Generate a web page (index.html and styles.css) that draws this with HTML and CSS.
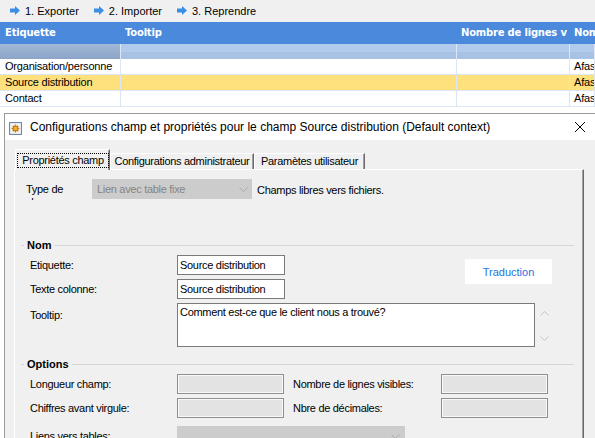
FILE: index.html
```html
<!DOCTYPE html>
<html lang="fr">
<head>
    <meta charset="UTF-8"/>
    <title>Configurations champ</title>
    <link rel="stylesheet" href="styles.css">
</head>
<body>

    <div class="toolbar">
        <span class="tool"><svg viewBox="0 0 10 9"><polygon points="0,2.5 5,2.5 5,0 10,4.5 5,9 5,6.5 0,6.5"/></svg>1. Exporter</span>
        <span class="tool"><svg viewBox="0 0 10 9"><polygon points="0,2.5 5,2.5 5,0 10,4.5 5,9 5,6.5 0,6.5"/></svg>2. Importer</span>
        <span class="tool"><svg viewBox="0 0 10 9"><polygon points="0,2.5 5,2.5 5,0 10,4.5 5,9 5,6.5 0,6.5"/></svg>3. Reprendre</span>
    </div>

    <div class="grid">
        <div class="grid-row head">
            <div class="cell first">Etiquette</div>
            <div class="cell">Tooltip</div>
            <div class="cell">Nombre de lignes v</div>
            <div class="cell">Nom</div>
        </div>
        <div class="grid-row filter">
            <div class="cell first"></div>
            <div class="cell"></div>
            <div class="cell"></div>
            <div class="cell"></div>
        </div>
        <div class="grid-row">
            <div class="cell first">Organisation/personne</div>
            <div class="cell"></div>
            <div class="cell"></div>
            <div class="cell">Afas</div>
        </div>
        <div class="grid-row selected">
            <div class="cell first">Source distribution</div>
            <div class="cell"></div>
            <div class="cell"></div>
            <div class="cell">Afas</div>
        </div>
        <div class="grid-row">
            <div class="cell first">Contact</div>
            <div class="cell"></div>
            <div class="cell"></div>
            <div class="cell">Afas</div>
        </div>
    </div>

    <div class="dialog">
        <div class="titlebar">
            <svg class="app-icon" viewBox="0 0 13 13">
                <rect x="0.5" y="0.5" width="12" height="12" fill="#dfe7f3" stroke="#7187b0"/>
                <rect x="2" y="2" width="9" height="9" fill="#fbf6e8"/>
                <g stroke="#c97a10" stroke-width="1.4">
                    <line x1="6.5" y1="2.5" x2="6.5" y2="10.5"/>
                    <line x1="2.5" y1="6.5" x2="10.5" y2="6.5"/>
                    <line x1="3.7" y1="3.7" x2="9.3" y2="9.3"/>
                    <line x1="9.3" y1="3.7" x2="3.7" y2="9.3"/>
                </g>
                <circle cx="6.5" cy="6.5" r="2.3" fill="#f2b233" stroke="#b56a08" stroke-width="0.8"/>
            </svg>
            <span class="title">Configurations champ et propriétés pour le champ Source distribution (Default context)</span>
            <svg class="close" viewBox="0 0 10 10">
                <line x1="0" y1="0" x2="10" y2="10"/>
                <line x1="10" y1="0" x2="0" y2="10"/>
            </svg>
        </div>

        <div class="dialog-body">
            <div class="tabs">
                <div class="tab active tab-props"><span class="focus">Propriétés champ</span></div>
                <div class="tab tab-admin">Configurations administrateur</div>
                <div class="tab tab-user">Paramètes utilisateur</div>
            </div>

            <div class="panel">
                <div class="type-row">
                    <div class="type-label">Type de<br>champ:</div>
                    <div class="select type-select">
                        <span>Lien avec table fixe</span>
                        <svg class="chevron" viewBox="0 0 9 5"><polyline points="0.5,0.5 4.5,4.5 8.5,0.5"/></svg>
                    </div>
                    <div class="type-note">Champs libres vers fichiers.</div>
                </div>

                <div class="legend">Nom</div>
                <div class="nom-grid">
                    <div class="label">Etiquette:</div>
                    <div class="field">Source distribution</div>
                    <div class="traduction">Traduction</div>

                    <div class="label">Texte colonne:</div>
                    <div class="field">Source distribution</div>

                    <div class="label top">Tooltip:</div>
                    <div class="tooltip-cell">
                        <div class="textarea">Comment est-ce que le client nous a trouvé?</div>
                        <div class="spin">
                            <svg viewBox="0 0 9 5"><polyline points="0.5,4.5 4.5,0.5 8.5,4.5"/></svg>
                            <svg viewBox="0 0 9 5"><polyline points="0.5,0.5 4.5,4.5 8.5,0.5"/></svg>
                        </div>
                    </div>
                </div>

                <div class="legend options">Options</div>
                <div class="opt-grid">
                    <div class="label">Longueur champ:</div>
                    <div class="field disabled"></div>
                    <div class="label second">Nombre de lignes visibles:</div>
                    <div class="field disabled"></div>

                    <div class="label">Chiffres avant virgule:</div>
                    <div class="field disabled"></div>
                    <div class="label second">Nbre de décimales:</div>
                    <div class="field disabled"></div>

                    <div class="label end">Liens vers tables:</div>
                    <div class="select links-select">
                        <span></span>
                        <svg class="chevron" viewBox="0 0 9 5"><polyline points="0.5,0.5 4.5,4.5 8.5,0.5"/></svg>
                    </div>
                </div>
            </div>
        </div>
    </div>

</body>
</html>
```

FILE: styles.css
```css
body {
    margin: 0;
    width: 595px;
    height: 438px;
    overflow: hidden;
    font-family: "Liberation Sans", Arial, sans-serif;
    font-size: 11px;
    color: #000;
    background-color: #fff;
}

* {
    box-sizing: border-box;
}

/* barre d'outils */

.toolbar {
    display: flex;
    align-items: center;
    gap: 15px;
    height: 22px;
    padding-left: 10px;
    padding-bottom: 1px;
    background-color: #f0f0f0;
}

.tool {
    display: flex;
    align-items: center;
    gap: 5px;
}

.tool svg {
    width: 10px;
    height: 9px;
    fill: #3a8ee6;
}

/* grille */

.grid {
    background-color: #fff;
    padding-bottom: 6px;
}

.grid-row {
    display: grid;
    grid-template-columns: 121px 336px 113px 1fr;
    height: 16px;
}

.cell {
    padding-left: 4px;
    border-right: 1px solid #dbe6f4;
    border-bottom: 1px solid #dbe6f4;
    line-height: 15px;
    white-space: nowrap;
    overflow: hidden;
    letter-spacing: -0.2px;
}

.cell.first {
    padding-left: 5px;
}

.head {
    height: 22px;
    background-color: #4a89dc;
}

.head .cell {
    font-family: "DejaVu Sans", Verdana, sans-serif;
    font-weight: bold;
    font-size: 10px;
    color: #fff;
    border: none;
    line-height: 22px;
}

.filter {
    height: 15px;
}

.filter .cell {
    background: linear-gradient(#b2caeb 0, #b2caeb 55%, #a8c2e6 55%, #a8c2e6 100%);
    border-right: 1px solid #dde8f6;
    border-bottom: none;
}

.filter .cell.first {
    background: linear-gradient(#a3b8d6, #8ba4c8);
}

.selected {
    background-color: #fee07c;
}

/* dialogue */

.dialog {
    margin-left: 4px;
    border-left: 1px solid #9a9a9a;
    border-top: 1px solid #9a9a9a;
}

.titlebar {
    display: flex;
    align-items: center;
    height: 26px;
    padding-left: 4px;
    padding-right: 10px;
    background-color: #fff;
}

.app-icon {
    width: 13px;
    height: 13px;
    margin-right: 8px;
    margin-top: 3px;
    flex-shrink: 0;
}

.title {
    font-size: 12px;
    white-space: nowrap;
}

.close {
    width: 10px;
    height: 10px;
    margin-left: auto;
    stroke: #000;
    stroke-width: 1;
    flex-shrink: 0;
}

.dialog-body {
    height: 300px;
    padding-top: 9px;
    background-color: #f0f0f0;
    letter-spacing: -0.3px;
}

/* onglets */

.tabs {
    display: flex;
    align-items: flex-end;
    height: 20px;
    padding-left: 10px;
    position: relative;
    z-index: 1;
}

.tab {
    height: 16px;
    line-height: 15px;
    text-align: center;
    white-space: nowrap;
    border-top: 1px solid #fff;
    border-left: 1px solid #fff;
    border-right: 1px solid #696969;
    box-shadow: inset -1px 0 #a0a0a0;
}

.tab-props {
    width: 95px;
}

.tab-admin {
    width: 144px;
}

.tab-user {
    width: 111px;
}

.tab.active {
    height: 21px;
    margin-bottom: -1px;
    display: flex;
    align-items: center;
    justify-content: center;
    background-color: #f0f0f0;
    padding-left: 1px;
}

.focus {
    border: 1px dotted #000;
    padding: 0 4px;
    line-height: 13px;
}

.panel {
    width: 570px;
    height: 280px;
    margin-left: 9px;
    border-top: 1px solid #fff;
    border-left: 1px solid #fff;
    border-right: 1px solid #696969;
    box-shadow: inset -1px 0 #a0a0a0;
}

/* type de champ */

.type-row {
    display: flex;
    align-items: center;
    margin-top: 9px;
    padding-left: 11px;
}

.type-label {
    width: 66px;
    height: 21px;
    padding-top: 4px;
    line-height: 13px;
    overflow: hidden;
}

.select {
    display: flex;
    align-items: center;
    justify-content: space-between;
    height: 20px;
    padding: 0 4px 0 5px;
    background-color: #cccccc;
    color: #858585;
}

.type-select {
    width: 160px;
    margin-top: -1px;
}

.chevron,
.spin svg {
    width: 9px;
    height: 5px;
    fill: none;
    stroke: #adadad;
    stroke-width: 1;
}

.type-note {
    margin-left: 5px;
}

/* groupes */

.legend {
    display: flex;
    align-items: center;
    gap: 3px;
    height: 14px;
    margin: 38px 9px 0 6px;
    font-weight: bold;
    letter-spacing: 0;
}

.legend::before {
    content: "";
    width: 3px;
    border-top: 1px solid #d6d6d6;
}

.legend::after {
    content: "";
    flex: 1;
    border-top: 1px solid #d6d6d6;
}

.legend.options {
    margin-top: 10px;
}

.label {
    grid-column: 1;
    white-space: nowrap;
}

.label.top {
    align-self: start;
    margin-top: 6px;
}

.field {
    grid-column: 2;
    height: 20px;
    padding-left: 2px;
    line-height: 18px;
    background-color: #fff;
    border: 1px solid #7a7a7a;
    white-space: nowrap;
}

.field.disabled {
    background-color: #e3e3e3;
    border-color: #8f8f8f;
    box-shadow: inset 0 0 0 1px #f7f7f7;
}

.nom-grid {
    display: grid;
    grid-template-columns: 147px 108px 180px 87px;
    grid-template-rows: 20px 20px 44px;
    row-gap: 4px;
    align-items: center;
    margin-top: 3px;
    padding-left: 15px;
}

.traduction {
    grid-column: 4;
    grid-row: 1 / 3;
    align-self: start;
    display: flex;
    align-items: center;
    justify-content: center;
    height: 25px;
    margin-top: 4px;
    background-color: #fff;
    color: #2474dc;
    letter-spacing: 0;
}

.tooltip-cell {
    grid-column: 2 / 5;
    display: flex;
    height: 44px;
}

.textarea {
    width: 358px;
    height: 44px;
    padding: 2px 2px 0;
    line-height: 13px;
    background-color: #fff;
    border: 1px solid #7a7a7a;
}

.spin {
    display: flex;
    flex-direction: column;
    justify-content: space-between;
    margin-left: 5px;
    padding: 8px 0 6px;
}

.spin svg {
    stroke: #c4c4c4;
}

.opt-grid {
    display: grid;
    grid-template-columns: 147px 107px 157px 107px;
    grid-template-rows: 20px 20px 24px;
    row-gap: 4px;
    align-items: center;
    margin-top: 3px;
    padding-left: 15px;
}

.opt-grid .label.second {
    grid-column: 3;
    padding-left: 9px;
}

.opt-grid .label.second + .field {
    grid-column: 4;
}

.label.end {
    align-self: end;
    line-height: 20px;
    height: 20px;
}

.links-select {
    grid-column: 2 / 4;
    align-self: end;
    width: 228px;
    padding-right: 5px;
}
```
